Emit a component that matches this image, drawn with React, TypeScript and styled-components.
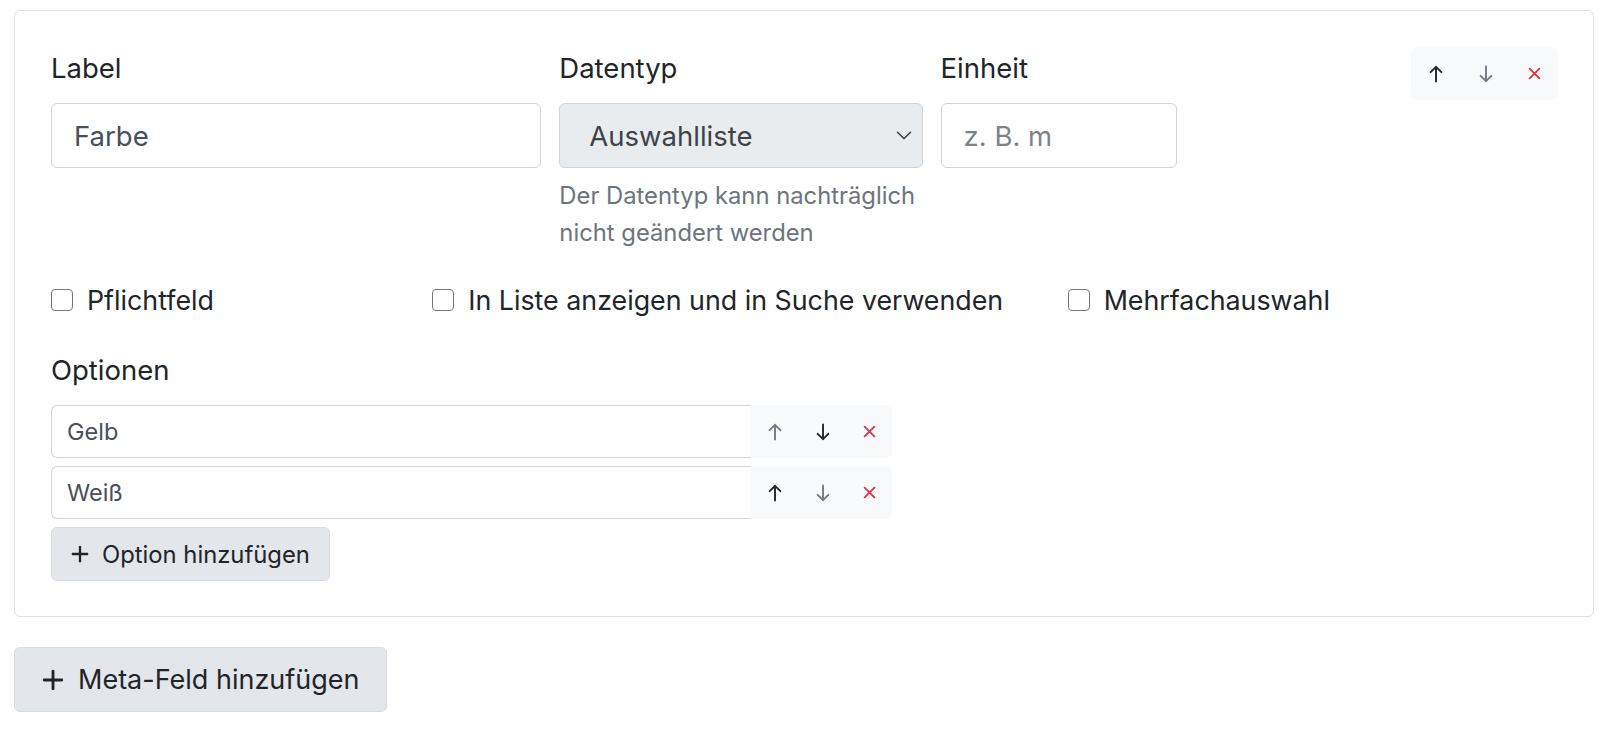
import styled, { createGlobalStyle } from "styled-components";

const GUTTER = 18;

const GlobalStyle = createGlobalStyle`
	body {
		margin: 0;
		background: #fff;
		color: #212529;
		font-family: Inter, "Noto Sans", "Liberation Sans", sans-serif;
	}
	* { box-sizing: border-box; }
`;

const Page = styled.div`
	display: flex;
	flex-direction: column;
	align-items: flex-start;
	gap: 30px;
	padding: 10px 6px 20px 14px;
`;

const Card = styled.div`
	align-self: stretch;
	border: 1px solid #dee2e6;
	border-radius: 6px;
	padding: 36px 35px 35px 36px;
`;

const TopRow = styled.div`
	display: grid;
	grid-template-columns:
		calc((100% + ${GUTTER}px) / 3 - ${GUTTER}px)
		calc((100% + ${GUTTER}px) / 4 - ${GUTTER}px)
		calc((100% + ${GUTTER}px) / 6 - ${GUTTER}px)
		1fr;
	column-gap: ${GUTTER}px;
	align-items: start;
`;

const Field = styled.div`
	display: flex;
	flex-direction: column;
`;

const Label = styled.label<{ $gap?: number }>`
	font-size: 27.5px;
	line-height: 42px;
	margin-bottom: ${(p) => p.$gap ?? 14}px;
`;

const Input = styled.input`
	height: 65px;
	border: 1px solid #ced4da;
	border-radius: 6px;
	padding: 0 22px;
	font: inherit;
	font-size: 27.5px;
	color: #495057;
	background: #fff;
	outline: none;
	&::placeholder {
		color: #7b838b;
	}
`;

const SelectBox = styled.div`
	height: 65px;
	border: 1px solid #ced4da;
	border-radius: 6px;
	background: #e9ecef;
	padding: 0 10px 0 29px;
	display: flex;
	align-items: center;
	justify-content: space-between;
	font-size: 27.5px;
	color: #3d4349;
`;

const Help = styled.div`
	margin-top: 9px;
	font-size: 23.8px;
	line-height: 37px;
	color: #6c757d;
`;

const ButtonGroup = styled.div<{ $height: number }>`
	display: flex;
	height: ${(p) => p.$height}px;
	border-radius: 0 6px 6px 0;
	overflow: hidden;
	background: #f8f9fa;
`;

const TopGroup = styled(ButtonGroup)`
	justify-self: end;
	border-radius: 6px;
`;

const IconButton = styled.button<{ $width: number; $tone: Tone }>`
	width: ${(p) => p.$width}px;
	height: 100%;
	border: none;
	background: transparent;
	display: flex;
	align-items: center;
	justify-content: center;
	padding: 0;
	color: ${(p) =>
		p.$tone === "dark" ? "#212529" : p.$tone === "danger" ? "#dc3545" : "#737a81"};
`;

const CheckRow = styled.div`
	display: grid;
	grid-template-columns:
		calc((100% + ${GUTTER}px) * 3 / 12)
		calc((100% + ${GUTTER}px) * 5 / 12)
		1fr;
	margin-top: 28px;
`;

const CheckItem = styled.label`
	display: flex;
	align-items: center;
	gap: 14px;
	font-size: 26.8px;
	line-height: 42px;
`;

const CheckBox = styled.span`
	width: 22px;
	height: 22px;
	border: 1.5px solid #74787d;
	border-radius: 4px;
	background: #fff;
	flex: none;
`;

const Options = styled.div`
	display: flex;
	flex-direction: column;
	align-items: flex-start;
	gap: 8px;
	margin-top: 28px;
`;

const OptionList = styled.div`
	display: flex;
	flex-direction: column;
	gap: 8px;
	margin-top: 6px;
`;

const OptionRow = styled.div`
	display: flex;
	height: 53px;
`;

const OptionInput = styled.input`
	width: 700px;
	height: 100%;
	border: 1px solid #ced4da;
	border-right: none;
	border-radius: 6px 0 0 6px;
	padding: 0 15px;
	font: inherit;
	font-size: 23.5px;
	color: #495057;
	outline: none;
`;

const AddButton = styled.button<{ $large?: boolean }>`
	display: flex;
	align-items: center;
	gap: ${(p) => (p.$large ? 14 : 13)}px;
	height: ${(p) => (p.$large ? 65 : 54)}px;
	padding: ${(p) => (p.$large ? "0 26px 0 27px" : "0 19px 0 19px")};
	border: 1px solid #d8dce0;
	border-radius: 6px;
	background: #e3e6ea;
	color: #212529;
	font-family: inherit;
	font-size: ${(p) => (p.$large ? 27 : 23.8)}px;
`;

type Tone = "dark" | "muted" | "danger";

function Arrow({ up, size }: { up: boolean; size: number }) {
	return (
		<svg
			width={size * 0.78}
			height={size}
			viewBox="0 0 14 18"
			fill="none"
			stroke="currentColor"
			strokeWidth={1.9}
			strokeLinecap="round"
			strokeLinejoin="round"
			style={{ transform: up ? undefined : "rotate(180deg)" }}
		>
			<path d="M7 16.5V1.8M1.6 7.2L7 1.8l5.4 5.4" />
		</svg>
	);
}

function Cross({ size }: { size: number }) {
	return (
		<svg width={size} height={size} viewBox="0 0 12 12" stroke="currentColor" strokeWidth={1.7} strokeLinecap="round">
			<path d="M1.5 1.5l9 9M10.5 1.5l-9 9" />
		</svg>
	);
}

function Plus({ size }: { size: number }) {
	return (
		<svg width={size} height={size} viewBox="0 0 20 20" stroke="currentColor" strokeWidth={2.6} strokeLinecap="round">
			<path d="M10 2v16M2 10h16" />
		</svg>
	);
}

function Chevron() {
	return (
		<svg width="16" height="9" viewBox="0 0 16 9" fill="none" stroke="#343a40" strokeWidth={1.5} strokeLinecap="round" strokeLinejoin="round">
			<path d="M1.5 1.2L8 7.5l6.5-6.3" />
		</svg>
	);
}

function MoveButtons({
	width,
	height,
	upTone,
	downTone,
	size,
	top,
}: {
	width: number;
	height: number;
	upTone: Tone;
	downTone: Tone;
	size: number;
	top?: boolean;
}) {
	const Group = top ? TopGroup : ButtonGroup;
	return (
		<Group $height={height}>
			<IconButton $width={width} $tone={upTone}>
				<Arrow up size={size} />
			</IconButton>
			<IconButton $width={width} $tone={downTone}>
				<Arrow up={false} size={size} />
			</IconButton>
			<IconButton $width={width - 3} $tone="danger">
				<Cross size={13} />
			</IconButton>
		</Group>
	);
}

const options: { value: string; up: Tone; down: Tone }[] = [
	{ value: "Gelb", up: "muted", down: "dark" },
	{ value: "Weiß", up: "dark", down: "muted" },
];

export default function App() {
	return (
		<>
			<GlobalStyle />
			<Page>
				<Card>
					<TopRow>
						<Field>
							<Label>Label</Label>
							<Input defaultValue="Farbe" />
						</Field>
						<Field>
							<Label>Datentyp</Label>
							<SelectBox>
								<span>Auswahlliste</span>
								<Chevron />
							</SelectBox>
							<Help>Der Datentyp kann nachträglich nicht geändert werden</Help>
						</Field>
						<Field>
							<Label>Einheit</Label>
							<Input placeholder="z. B. m" />
						</Field>
						<MoveButtons top width={50} height={53} upTone="dark" downTone="muted" size={18} />
					</TopRow>

					<CheckRow>
						<CheckItem>
							<CheckBox />
							Pflichtfeld
						</CheckItem>
						<CheckItem>
							<CheckBox />
							In Liste anzeigen und in Suche verwenden
						</CheckItem>
						<CheckItem>
							<CheckBox />
							Mehrfachauswahl
						</CheckItem>
					</CheckRow>

					<Options>
						<Label $gap={0}>Optionen</Label>
						<OptionList>
							{options.map((o) => (
								<OptionRow key={o.value}>
									<OptionInput defaultValue={o.value} />
									<MoveButtons width={48} height={53} upTone={o.up} downTone={o.down} size={18} />
								</OptionRow>
							))}
						</OptionList>
						<AddButton>
							<Plus size={18} />
							Option hinzufügen
						</AddButton>
					</Options>
				</Card>
				<AddButton $large>
					<Plus size={22} />
					Meta-Feld hinzufügen
				</AddButton>
			</Page>
		</>
	);
}
